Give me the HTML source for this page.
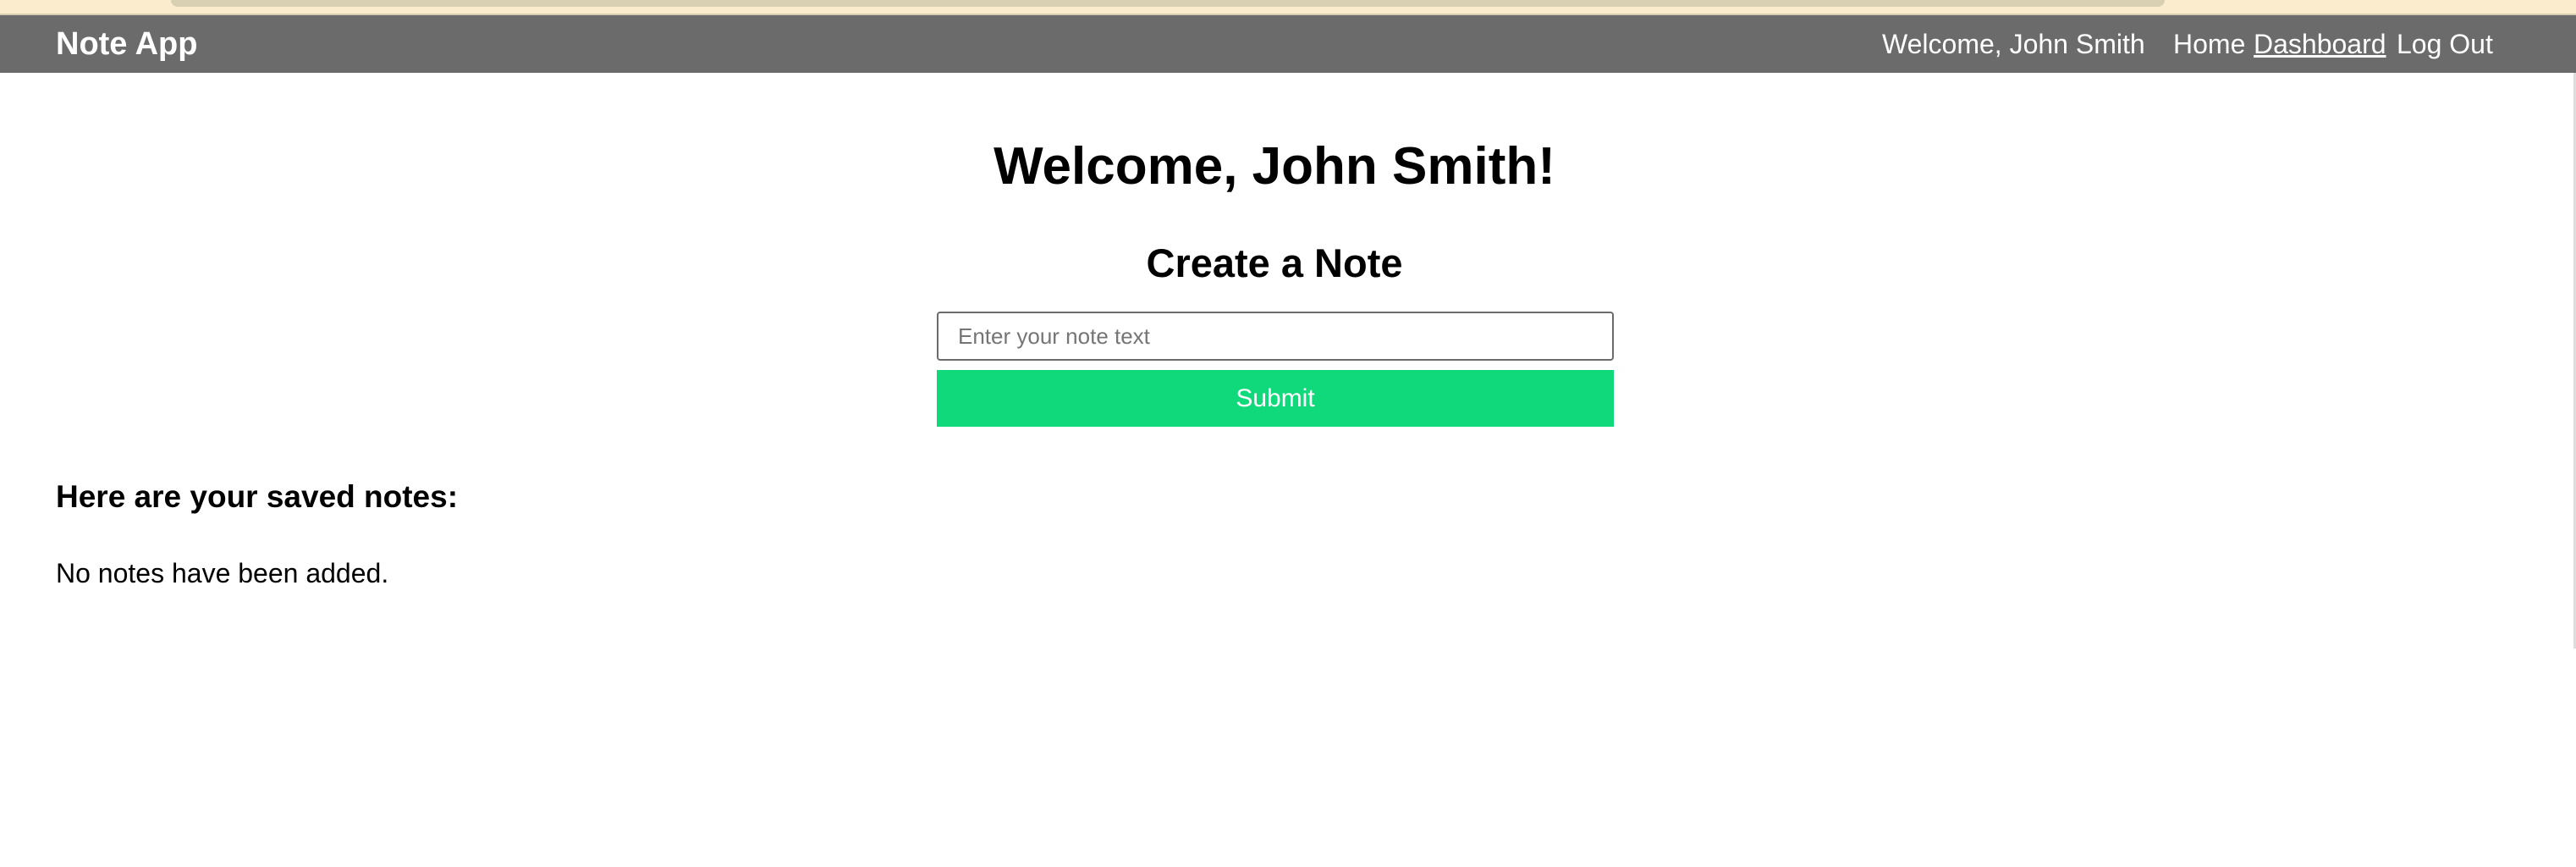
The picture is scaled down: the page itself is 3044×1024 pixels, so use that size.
<!DOCTYPE html>
<html><head><meta charset="utf-8"><style>
*{margin:0;padding:0;box-sizing:border-box}
body{width:3044px;height:1024px;background:#fff;font-family:"Liberation Sans",Arial,sans-serif;position:relative;overflow:hidden;color:#000}
.top{position:absolute;left:0;top:0;width:3044px;height:16px;background:#faeccd}
.top .bar{position:absolute;left:202px;top:0;width:2356px;height:8px;background:#d9d0b3;border-radius:0 0 12px 12px}
.top .line{position:absolute;left:0;top:16px;width:3044px;height:2px;background:#d6ccb0}
.nav{position:absolute;left:0;top:18px;width:3044px;height:68px;background:#6b6b6b;color:#fff}
.nav .brand{position:absolute;left:66px;top:12px;font-weight:bold;font-size:38px;line-height:44px}
.nav span.r{position:absolute;top:14px;font-size:32px;line-height:40px}
.t{position:absolute;left:0;width:3012px;text-align:center;font-weight:bold}
.inp{position:absolute;left:1107px;top:368px;width:800px;height:58px;border:2px solid #6b6b6b;border-radius:4px;font-size:26px;color:#757575;padding-left:23px;line-height:54px}
.btn{position:absolute;left:1107px;top:437px;width:800px;height:67px;background:#10d97b;color:#fff;font-size:30px;text-align:center;line-height:67px}
</style></head><body>
<div class="top"><div class="bar"></div><div class="line"></div></div>
<div class="nav">
<div class="brand">Note App</div>
<span class="r" style="left:2224px">Welcome, John Smith</span>
<span class="r" style="left:2568px">Home</span>
<span class="r" style="left:2663px;text-decoration:underline">Dashboard</span>
<span class="r" style="left:2832px">Log Out</span>
</div>
<div style="position:absolute;right:0;top:86px;width:3px;height:680px;background:#ddd"></div>
<div class="t" style="top:159px;font-size:62px;line-height:76px">Welcome, John Smith!</div>
<div class="t" style="top:283px;font-size:47px;line-height:56px">Create a Note</div>
<div class="inp">Enter your note text</div>
<div class="btn">Submit</div>
<div style="position:absolute;left:66px;top:564px;font-weight:bold;font-size:37px;line-height:46px">Here are your saved notes:</div>
<div style="position:absolute;left:66px;top:657px;font-size:32px;line-height:40px">No notes have been added.</div>
</body></html>
